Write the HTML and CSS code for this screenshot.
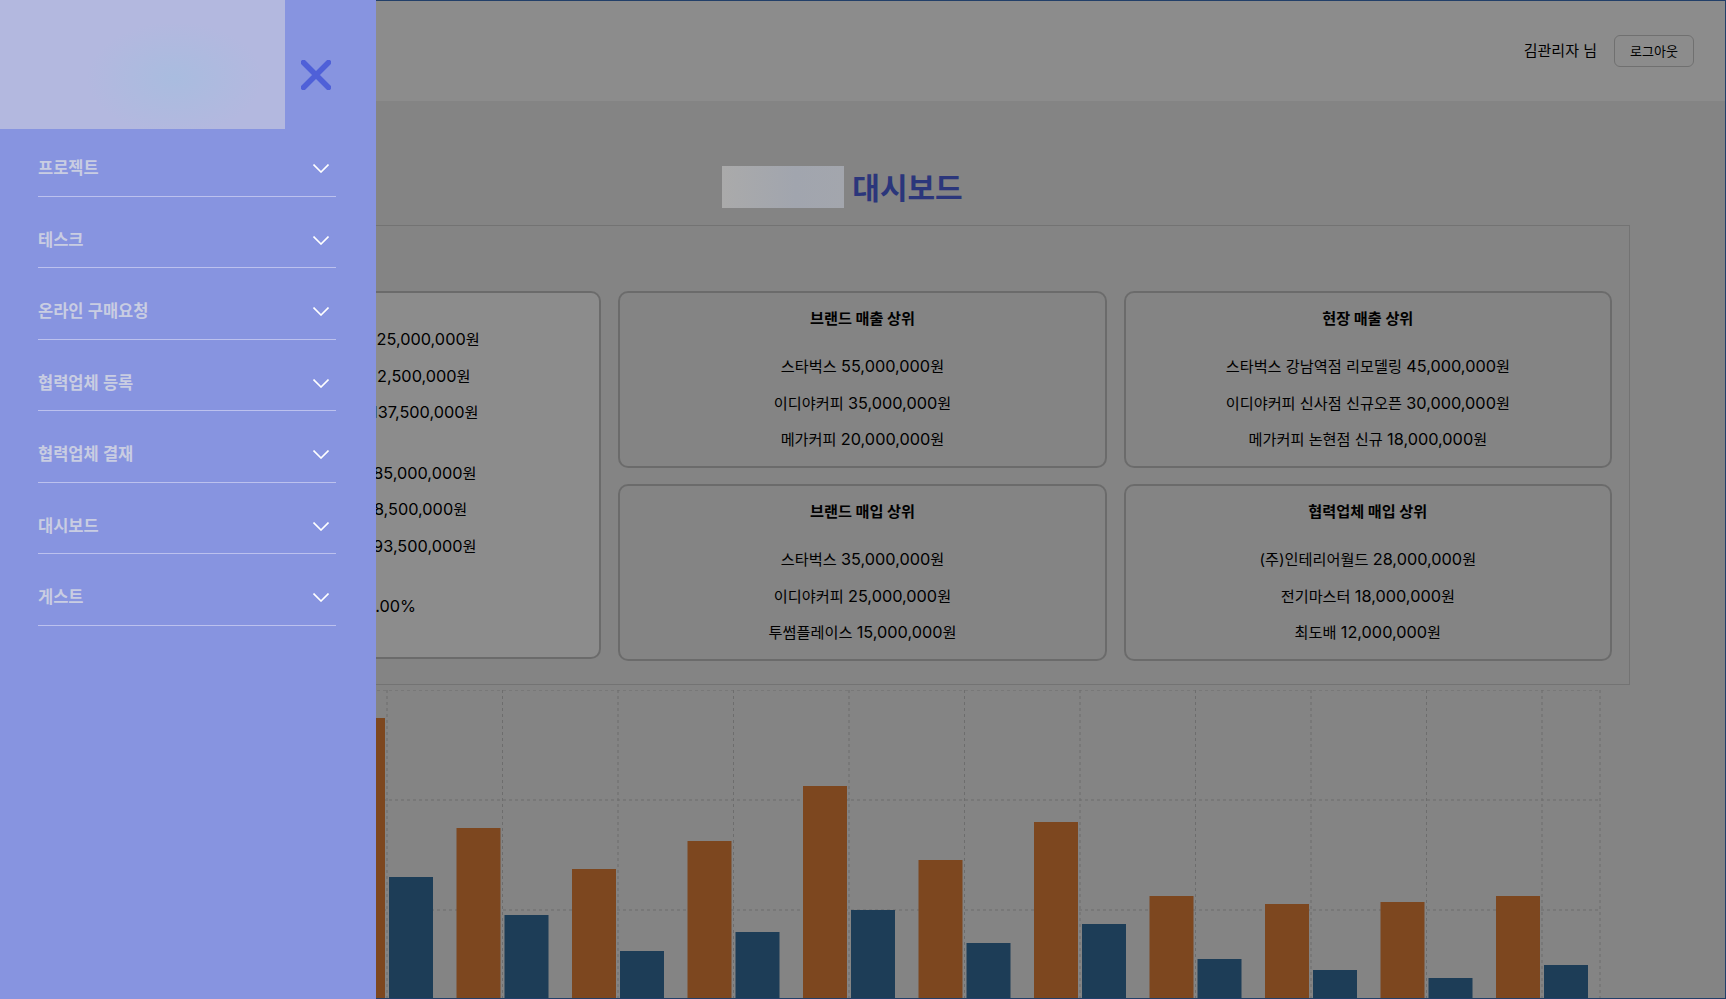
FILE: index.html
```html
<!DOCTYPE html>
<html lang="ko">
<head>
  <meta charset="UTF-8" />
  <meta name="viewport" content="width=device-width, initial-scale=1" />
  <title>대시보드</title>
  <link rel="stylesheet" href="styles.css">
</head>
<body>
  <div class="page">
    <header class="top-bar">
      <span class="user-name">김관리자 님</span>
      <button class="logout-btn">로그아웃</button>
    </header>

    <main class="content">
      <div class="title-row">
        <div class="title-logo"></div>
        <h1>대시보드</h1>
      </div>

      <section class="summary-panel">
        <div class="card card-total">
          <div class="stat-group">
            <p>총 매출 공급가 합계: <span class="amt">125,000,000</span>원</p>
            <p>총매출부가세 합계: <span class="amt">12,500,000</span>원</p>
            <p>총 매출 금액 합계액: <span class="amt">137,500,000</span>원</p>
          </div>
          <div class="stat-group">
            <p>총 매입 공급가 합계: <span class="amt">85,000,000</span>원</p>
            <p>총매입부가세 합계: <span class="amt">8,500,000</span>원</p>
            <p>총 매입 금액 합계액: <span class="amt">93,500,000</span>원</p>
          </div>
          <div class="stat-group">
            <p>이익률 : <span class="amt">32.00%</span></p>
          </div>
        </div>

        <div class="card">
          <h3>브랜드 매출 상위</h3>
          <p>스타벅스 <span class="amt">55,000,000</span>원</p>
          <p>이디야커피 <span class="amt">35,000,000</span>원</p>
          <p>메가커피 <span class="amt">20,000,000</span>원</p>
        </div>

        <div class="card">
          <h3>현장 매출 상위</h3>
          <p>스타벅스 강남역점 리모델링 <span class="amt">45,000,000</span>원</p>
          <p>이디야커피 신사점 신규오픈 <span class="amt">30,000,000</span>원</p>
          <p>메가커피 논현점 신규 <span class="amt">18,000,000</span>원</p>
        </div>

        <div class="card">
          <h3>브랜드 매입 상위</h3>
          <p>스타벅스 <span class="amt">35,000,000</span>원</p>
          <p>이디야커피 <span class="amt">25,000,000</span>원</p>
          <p>투썸플레이스 <span class="amt">15,000,000</span>원</p>
        </div>

        <div class="card">
          <h3>협력업체 매입 상위</h3>
          <p>(주)인테리어월드 <span class="amt">28,000,000</span>원</p>
          <p>전기마스터 <span class="amt">18,000,000</span>원</p>
          <p>최도배 <span class="amt">12,000,000</span>원</p>
        </div>
      </section>

      <svg class="chart" width="1536" height="329" viewBox="0 0 1536 329">
        <g class="grid">
          <line x1="234" y1="0" x2="1505" y2="0" />
          <line x1="234" y1="110" x2="1505" y2="110" />
          <line x1="234" y1="220" x2="1505" y2="220" />
          <line x1="292" y1="0" x2="292" y2="329" />
          <line x1="407.5" y1="0" x2="407.5" y2="329" />
          <line x1="523" y1="0" x2="523" y2="329" />
          <line x1="638.5" y1="0" x2="638.5" y2="329" />
          <line x1="754" y1="0" x2="754" y2="329" />
          <line x1="869.5" y1="0" x2="869.5" y2="329" />
          <line x1="985" y1="0" x2="985" y2="329" />
          <line x1="1100.5" y1="0" x2="1100.5" y2="329" />
          <line x1="1216" y1="0" x2="1216" y2="329" />
          <line x1="1331.5" y1="0" x2="1331.5" y2="329" />
          <line x1="1447" y1="0" x2="1447" y2="329" />
          <line x1="1505" y1="0" x2="1505" y2="329" />
        </g>
        <g class="bars-sales">
          <rect x="246" y="28" width="44" height="301" />
          <rect x="361.5" y="138" width="44" height="191" />
          <rect x="477" y="179" width="44" height="150" />
          <rect x="592.5" y="151" width="44" height="178" />
          <rect x="708" y="96" width="44" height="233" />
          <rect x="823.5" y="170" width="44" height="159" />
          <rect x="939" y="132" width="44" height="197" />
          <rect x="1054.5" y="206" width="44" height="123" />
          <rect x="1170" y="214" width="44" height="115" />
          <rect x="1285.5" y="212" width="44" height="117" />
          <rect x="1401" y="206" width="44" height="123" />
        </g>
        <g class="bars-purchase">
          <rect x="294" y="187" width="44" height="142" />
          <rect x="409.5" y="225" width="44" height="104" />
          <rect x="525" y="261" width="44" height="68" />
          <rect x="640.5" y="242" width="44" height="87" />
          <rect x="756" y="220" width="44" height="109" />
          <rect x="871.5" y="253" width="44" height="76" />
          <rect x="987" y="234" width="44" height="95" />
          <rect x="1102.5" y="269" width="44" height="60" />
          <rect x="1218" y="280" width="44" height="49" />
          <rect x="1333.5" y="288" width="44" height="41" />
          <rect x="1449" y="275" width="44" height="54" />
        </g>
      </svg>
    </main>
  </div>

  <div class="overlay"></div>

  <!-- Side menu -->
  <aside class="side-menu">
    <div class="side-head">
      <div class="side-logo"></div>
      <button class="close-btn" aria-label="닫기">
        <svg width="30" height="30" viewBox="0 0 30 30">
          <path d="M2.5 2.5 L27.5 27.5 M27.5 2.5 L2.5 27.5" />
        </svg>
      </button>
    </div>
    <ul class="menu-list">
      <li class="menu-item"><span>프로젝트</span><svg class="chevron" width="16" height="9" viewBox="0 0 16 9"><path d="M0.5 0.5 L8 8 L15.5 0.5" /></svg></li>
      <li class="menu-item"><span>테스크</span><svg class="chevron" width="16" height="9" viewBox="0 0 16 9"><path d="M0.5 0.5 L8 8 L15.5 0.5" /></svg></li>
      <li class="menu-item"><span>온라인 구매요청</span><svg class="chevron" width="16" height="9" viewBox="0 0 16 9"><path d="M0.5 0.5 L8 8 L15.5 0.5" /></svg></li>
      <li class="menu-item"><span>협력업체 등록</span><svg class="chevron" width="16" height="9" viewBox="0 0 16 9"><path d="M0.5 0.5 L8 8 L15.5 0.5" /></svg></li>
      <li class="menu-item"><span>협력업체 결재</span><svg class="chevron" width="16" height="9" viewBox="0 0 16 9"><path d="M0.5 0.5 L8 8 L15.5 0.5" /></svg></li>
      <li class="menu-item"><span>대시보드</span><svg class="chevron" width="16" height="9" viewBox="0 0 16 9"><path d="M0.5 0.5 L8 8 L15.5 0.5" /></svg></li>
      <li class="menu-item"><span>게스트</span><svg class="chevron" width="16" height="9" viewBox="0 0 16 9"><path d="M0.5 0.5 L8 8 L15.5 0.5" /></svg></li>
    </ul>
  </aside>
</body>
</html>
```

FILE: styles.css
```css
* {
  box-sizing: border-box;
}

body {
  margin: 0;
  font-family: "Inter", "Noto Sans CJK KR", sans-serif;
  background-color: #f0f0f0;
  color: #000;
  overflow: hidden;
}

.page {
  height: 100vh;
  overflow: hidden;
  border: 1px solid #3f74c0;
}

.top-bar {
  display: flex;
  align-items: center;
  justify-content: flex-end;
  gap: 17px;
  height: 100px;
  padding-right: 31px;
  background-color: #fff;
}

.user-name {
  margin-bottom: 4px;
  font-size: 15px;
}

.logout-btn {
  width: 80px;
  height: 32px;
  padding: 0 0 2px;
  font-family: inherit;
  font-size: 13px;
  color: #000;
  background-color: #fff;
  border: 1px solid #ccc;
  border-radius: 6px;
}

.content {
  padding: 0 95px 0 94px;
}

.title-row {
  display: flex;
  align-items: center;
  justify-content: center;
  gap: 8px;
  height: 42px;
  margin-top: 65px;
  padding-right: 40px;
}

/* blurred logo stays bright above the overlay */
.title-logo {
  position: relative;
  z-index: 1;
  width: 122px;
  height: 42px;
  background: linear-gradient(90deg, #aaa, #a1a5ae 60%, #a3a6ad);
}

h1 {
  margin: 0 0 2px;
  font-size: 30px;
  font-weight: 700;
  color: #4f63e0;
}

.summary-panel {
  display: grid;
  grid-template-columns: repeat(3, 1fr);
  grid-template-rows: 176.5px 176.5px;
  gap: 16.5px 17px;
  margin-top: 17px;
  padding: 65px 17px 23px;
  border: 1px solid #d2d2d2;
}

.card {
  padding-top: 14px;
  text-align: center;
  border: 2px solid #c4c4c4;
  border-radius: 10px;
}

.card h3 {
  margin: 0 0 24px;
  font-size: 15.2px;
  font-weight: 700;
  line-height: 24px;
}

.card p {
  margin: 0 0 12.5px;
  font-size: 15.2px;
  line-height: 24px;
}

.amt {
  font-size: 16.3px;
  line-height: 1;
}

.card-total {
  grid-row: span 2;
  height: 368px;
  padding: 35px 0 0 2px;
  background-color: #fff;
}

.stat-group {
  margin-bottom: 36.5px;
}

.chart {
  display: block;
  margin-top: 5px;
}

.grid line {
  stroke: #c6c6c6;
  stroke-dasharray: 3 3;
}

.bars-sales rect {
  fill: #e3813a;
}

.bars-purchase rect {
  fill: #356f9e;
}

.overlay {
  position: fixed;
  inset: 0;
  background-color: rgba(0, 0, 0, 0.45);
}

.side-menu {
  position: fixed;
  z-index: 2;
  top: 0;
  bottom: 0;
  left: 0;
  width: 376px;
  background-color: #8794e0;
}

.side-head {
  display: flex;
  align-items: flex-start;
  height: 129px;
}

.side-logo {
  width: 285px;
  height: 129px;
  background: radial-gradient(ellipse 110px 70px at 175px 78px, #a9bcdf, #b3b8df 80%);
}

.close-btn {
  display: flex;
  width: 30px;
  height: 30px;
  margin: 60px 0 0 16px;
  padding: 0;
  background: none;
  border: none;
}

.close-btn path {
  fill: none;
  stroke: #4f60d8;
  stroke-width: 5.5;
  stroke-linecap: round;
}

.menu-list {
  margin: -4px 0 0;
  padding: 0;
  list-style: none;
}

.menu-item {
  display: flex;
  align-items: center;
  justify-content: space-between;
  height: 71.5px;
  margin: 0 40px 0 38px;
  padding: 14px 7px 0 0;
  font-size: 16.5px;
  font-weight: 600;
  color: #c9cde2;
  border-bottom: 1px solid #bcc1ee;
}

.chevron {
  margin-top: 3px;
}

.chevron path {
  fill: none;
  stroke: #fff;
  stroke-width: 1.6;
}
```
